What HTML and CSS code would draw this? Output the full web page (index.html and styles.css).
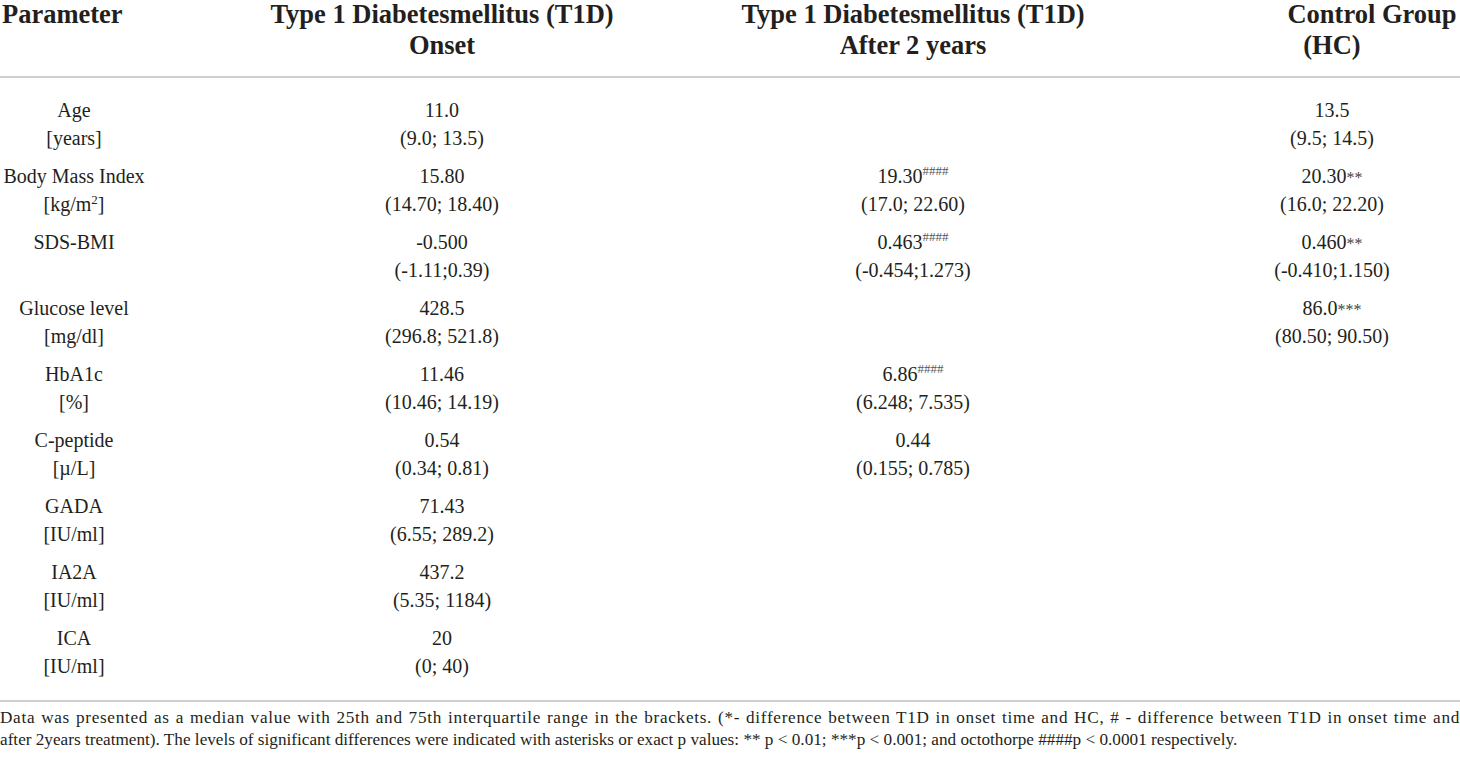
FILE: index.html
```html
<!DOCTYPE html>
<html lang="en">
<head>
<meta charset="utf-8">
<title>Table</title>
<link rel="stylesheet" href="styles.css">
</head>
<body>
<div class="page">
<table class="data">
  <colgroup>
    <col class="c1"><col class="c2"><col class="c3"><col class="c4">
  </colgroup>
  <thead>
    <tr>
      <th class="param"><span class="hl l1">Parameter</span></th>
      <th><span class="hl l1">Type 1 Diabetesmellitus (T1D)</span><span class="hl l2">Onset</span></th>
      <th><span class="hl l1">Type 1 Diabetesmellitus (T1D)</span><span class="hl l2">After 2 years</span></th>
      <th class="last"><span class="hl l1 shift">Control Group</span><span class="hl l2">(HC)</span></th>
    </tr>
  </thead>
  <tbody>
    <tr class="first">
      <td>Age<br>[years]</td>
      <td>11.0<br>(9.0; 13.5)</td>
      <td></td>
      <td class="last">13.5<br>(9.5; 14.5)</td>
    </tr>
    <tr>
      <td>Body Mass Index<br>[kg/m<sup class="sq">2</sup>]</td>
      <td>15.80<br>(14.70; 18.40)</td>
      <td>19.30<sup class="hash">####</sup><br>(17.0; 22.60)</td>
      <td class="last">20.30<span class="ast">**</span><br>(16.0; 22.20)</td>
    </tr>
    <tr>
      <td>SDS-BMI</td>
      <td>-0.500<br>(-1.11;0.39)</td>
      <td>0.463<sup class="hash">####</sup><br>(-0.454;1.273)</td>
      <td class="last">0.460<span class="ast">**</span><br>(-0.410;1.150)</td>
    </tr>
    <tr>
      <td>Glucose level<br>[mg/dl]</td>
      <td>428.5<br>(296.8; 521.8)</td>
      <td></td>
      <td class="last">86.0<span class="ast">***</span><br>(80.50; 90.50)</td>
    </tr>
    <tr>
      <td>HbA1c<br>[%]</td>
      <td>11.46<br>(10.46; 14.19)</td>
      <td>6.86<sup class="hash">####</sup><br>(6.248; 7.535)</td>
      <td class="last"></td>
    </tr>
    <tr>
      <td>C-peptide<br>[µ/L]</td>
      <td>0.54<br>(0.34; 0.81)</td>
      <td>0.44<br>(0.155; 0.785)</td>
      <td class="last"></td>
    </tr>
    <tr>
      <td>GADA<br>[IU/ml]</td>
      <td>71.43<br>(6.55; 289.2)</td>
      <td></td>
      <td class="last"></td>
    </tr>
    <tr>
      <td>IA2A<br>[IU/ml]</td>
      <td>437.2<br>(5.35; 1184)</td>
      <td></td>
      <td class="last"></td>
    </tr>
    <tr class="end">
      <td>ICA<br>[IU/ml]</td>
      <td>20<br>(0; 40)</td>
      <td></td>
      <td class="last"></td>
    </tr>
  </tbody>
</table>
<div class="foot">
  <span class="foot-l1">Data was presented as a median value with 25th and 75th interquartile range in the brackets. (*- difference between T1D in onset time and HC, # - difference between T1D in onset time and</span>
  <span class="foot-l2">after 2years treatment). The levels of significant differences were indicated with asterisks or exact p values: ** p &lt; 0.01; ***p &lt; 0.001; and octothorpe ####p &lt; 0.0001 respectively.</span>
</div>
</div>
</body>
</html>
```
FILE: styles.css
```css
html, body {
  margin: 0;
  padding: 0;
  background: #ffffff;
}
body {
  font-family: "Liberation Serif", "Times New Roman", serif;
  color: #231f20;
  width: 1460px;
  height: 760px;
  overflow: hidden;
}
.page {
  width: 1460px;
}
.data {
  width: 1460px;
  border-collapse: collapse;
  table-layout: fixed;
}
.c1 { width: 148px; }
.c2 { width: 588px; }
.c3 { width: 354px; }
.c4 { width: 370px; }

.data th {
  font-size: 26.5px;
  font-weight: bold;
  text-align: center;
  vertical-align: top;
  padding: 0 0 15px 0;
  border-bottom: 2px solid #cfcfcf;
  white-space: nowrap;
}
.data th.param {
  text-align: left;
  padding-left: 2px;
}
.hl {
  display: block;
}
.l1 {
  line-height: 29px;
}
.l2 {
  line-height: 32px;
}
.data th.param .l1 {
  padding-bottom: 32px;
}
.shift {
  padding-left: 80px;
}
.data th.last,
.data td.last {
  padding-left: 114px;
}
.data td {
  font-size: 20px;
  line-height: 28px;
  text-align: center;
  vertical-align: top;
  padding: 5px 0;
  white-space: nowrap;
}
.data tr.first td {
  padding-top: 18px;
}
.data tr.end td {
  padding-bottom: 20px;
  border-bottom: 2px solid #cfcfcf;
}
.sq {
  font-size: 13px;
  line-height: 0;
  vertical-align: 7px;
}
.hash {
  font-size: 13px;
  line-height: 0;
  vertical-align: 8px;
  color: #555555;
}
.ast {
  font-size: 16px;
  line-height: 0;
  color: #444;
}
.foot {
  margin-top: 5px;
  font-size: 17.2px;
  line-height: 22px;
}
.foot-l1 {
  display: block;
  text-align: justify;
  text-align-last: justify;
  letter-spacing: 0.7px;
  white-space: nowrap;
}
.foot-l2 {
  display: block;
  white-space: nowrap;
}
```
